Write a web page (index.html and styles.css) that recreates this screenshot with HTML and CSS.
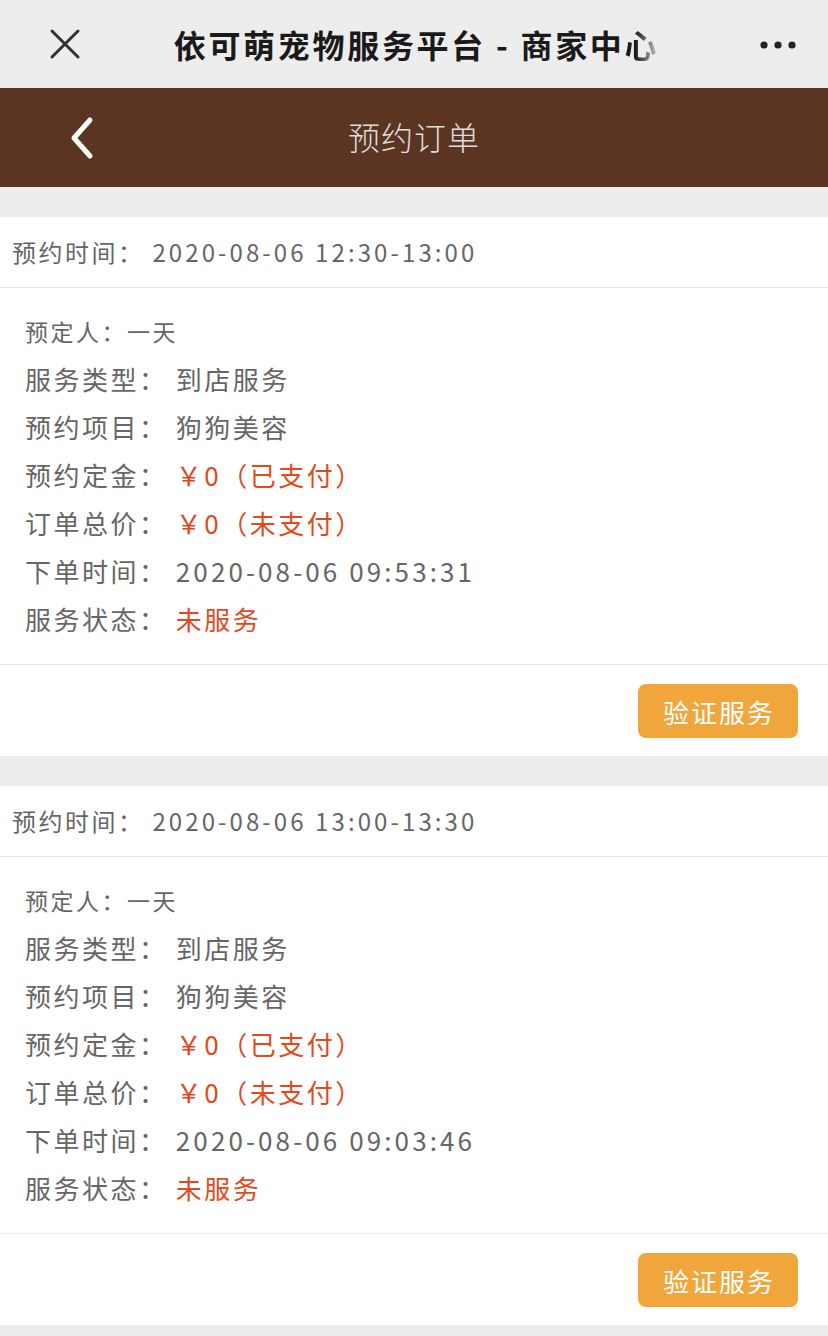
FILE: index.html
```html
<!DOCTYPE html>
<html lang="zh-CN">

<head>
    <meta charset="UTF-8">
    <meta name="viewport" content="width=device-width, initial-scale=1.0">
    <title>预约订单</title>
    <link rel="stylesheet" href="styles.css">
</head>

<body>
    <div class="topbar">
        <svg class="close" width="40" height="40" viewBox="0 0 40 40">
            <path d="M7 7 L33 33 M33 7 L7 33" stroke="#333" stroke-width="3" stroke-linecap="round" fill="none" />
        </svg>
        <div class="topbar-title">依可萌宠物服务平台 - 商家中<span class="fade">心</span></div>
        <svg class="more" width="40" height="12" viewBox="0 0 40 12">
            <circle cx="6" cy="6" r="3.6" fill="#222" />
            <circle cx="20" cy="6" r="3.6" fill="#222" />
            <circle cx="34" cy="6" r="3.6" fill="#222" />
        </svg>
    </div>

    <div class="header">
        <svg class="back" width="30" height="44" viewBox="0 0 30 44">
            <path d="M22 4 L6 22 L22 40" stroke="#fff" stroke-width="5" stroke-linecap="round" stroke-linejoin="round" fill="none" />
        </svg>
        <h1>预约订单</h1>
    </div>

    <div class="list">
        <div class="order">
            <div class="order-time">预约时间： <span class="num">2020-08-06 12:30-13:00</span></div>
            <div class="order-info">
                <p class="small">预定人：一天</p>
                <p>服务类型： 到店服务</p>
                <p>预约项目： 狗狗美容</p>
                <p>预约定金： <span class="red">￥0（已支付）</span></p>
                <p>订单总价： <span class="red">￥0（未支付）</span></p>
                <p>下单时间： <span class="num">2020-08-06 09:53:31</span></p>
                <p>服务状态： <span class="red">未服务</span></p>
            </div>
            <div class="order-foot">
                <button>验证服务</button>
            </div>
        </div>

        <div class="order">
            <div class="order-time">预约时间： <span class="num">2020-08-06 13:00-13:30</span></div>
            <div class="order-info">
                <p class="small">预定人：一天</p>
                <p>服务类型： 到店服务</p>
                <p>预约项目： 狗狗美容</p>
                <p>预约定金： <span class="red">￥0（已支付）</span></p>
                <p>订单总价： <span class="red">￥0（未支付）</span></p>
                <p>下单时间： <span class="num">2020-08-06 09:03:46</span></p>
                <p>服务状态： <span class="red">未服务</span></p>
            </div>
            <div class="order-foot">
                <button>验证服务</button>
            </div>
        </div>
    </div>
</body>

</html>
```

FILE: styles.css
```css
* {
    margin: 0;
    padding: 0;
    box-sizing: border-box;
    font-family: "Noto Sans CJK SC", "Noto Sans", sans-serif;
}

body {
    background: #ededed;
    color: #666;
    letter-spacing: 2.5px;
}

.topbar {
    height: 88px;
    display: flex;
    align-items: center;
    justify-content: space-between;
    padding: 0 30px 0 45px;
    background: #ededed;
}

.topbar-title {
    font-size: 32px;
    font-weight: bold;
    color: #1a1a1a;
    letter-spacing: 2.7px;
    margin-right: 10px;
}

.fade {
    background: linear-gradient(90deg, #1a1a1a 30%, #d0d0d0 100%);
    -webkit-background-clip: text;
    background-clip: text;
    color: transparent;
}

.more {
    margin-top: 2px;
}

.header {
    height: 99px;
    background: #5b3521;
    display: flex;
    align-items: center;
    justify-content: center;
    position: relative;
}

.back {
    position: absolute;
    left: 68px;
    top: 28px;
}

.header h1 {
    font-size: 32px;
    font-weight: 200;
    color: #ddd;
    letter-spacing: 1px;
    margin-bottom: 4px;
}

.list {
    padding-top: 30px;
}

.order {
    background: white;
    margin-bottom: 30px;
}

.order-time {
    height: 71px;
    line-height: 70px;
    padding-left: 12px;
    font-size: 24px;
    border-bottom: 1px solid #eaeaea;
}

.num {
    letter-spacing: 3.1px;
}

.order-info {
    padding: 19px 25px 21px;
    border-bottom: 1px solid #eaeaea;
}

.order-info p {
    font-size: 26px;
    line-height: 48px;
}

.order-info p.small {
    font-size: 23px;
}

.red {
    color: #e2491c;
}

.order-foot {
    display: flex;
    justify-content: flex-end;
    padding: 19px 30px 18px;
}

button {
    width: 160px;
    height: 54px;
    border: none;
    border-radius: 8px;
    background: #f0a63b;
    color: white;
    font-size: 26px;
    letter-spacing: 2px;
    padding-left: 2px;
}
```
